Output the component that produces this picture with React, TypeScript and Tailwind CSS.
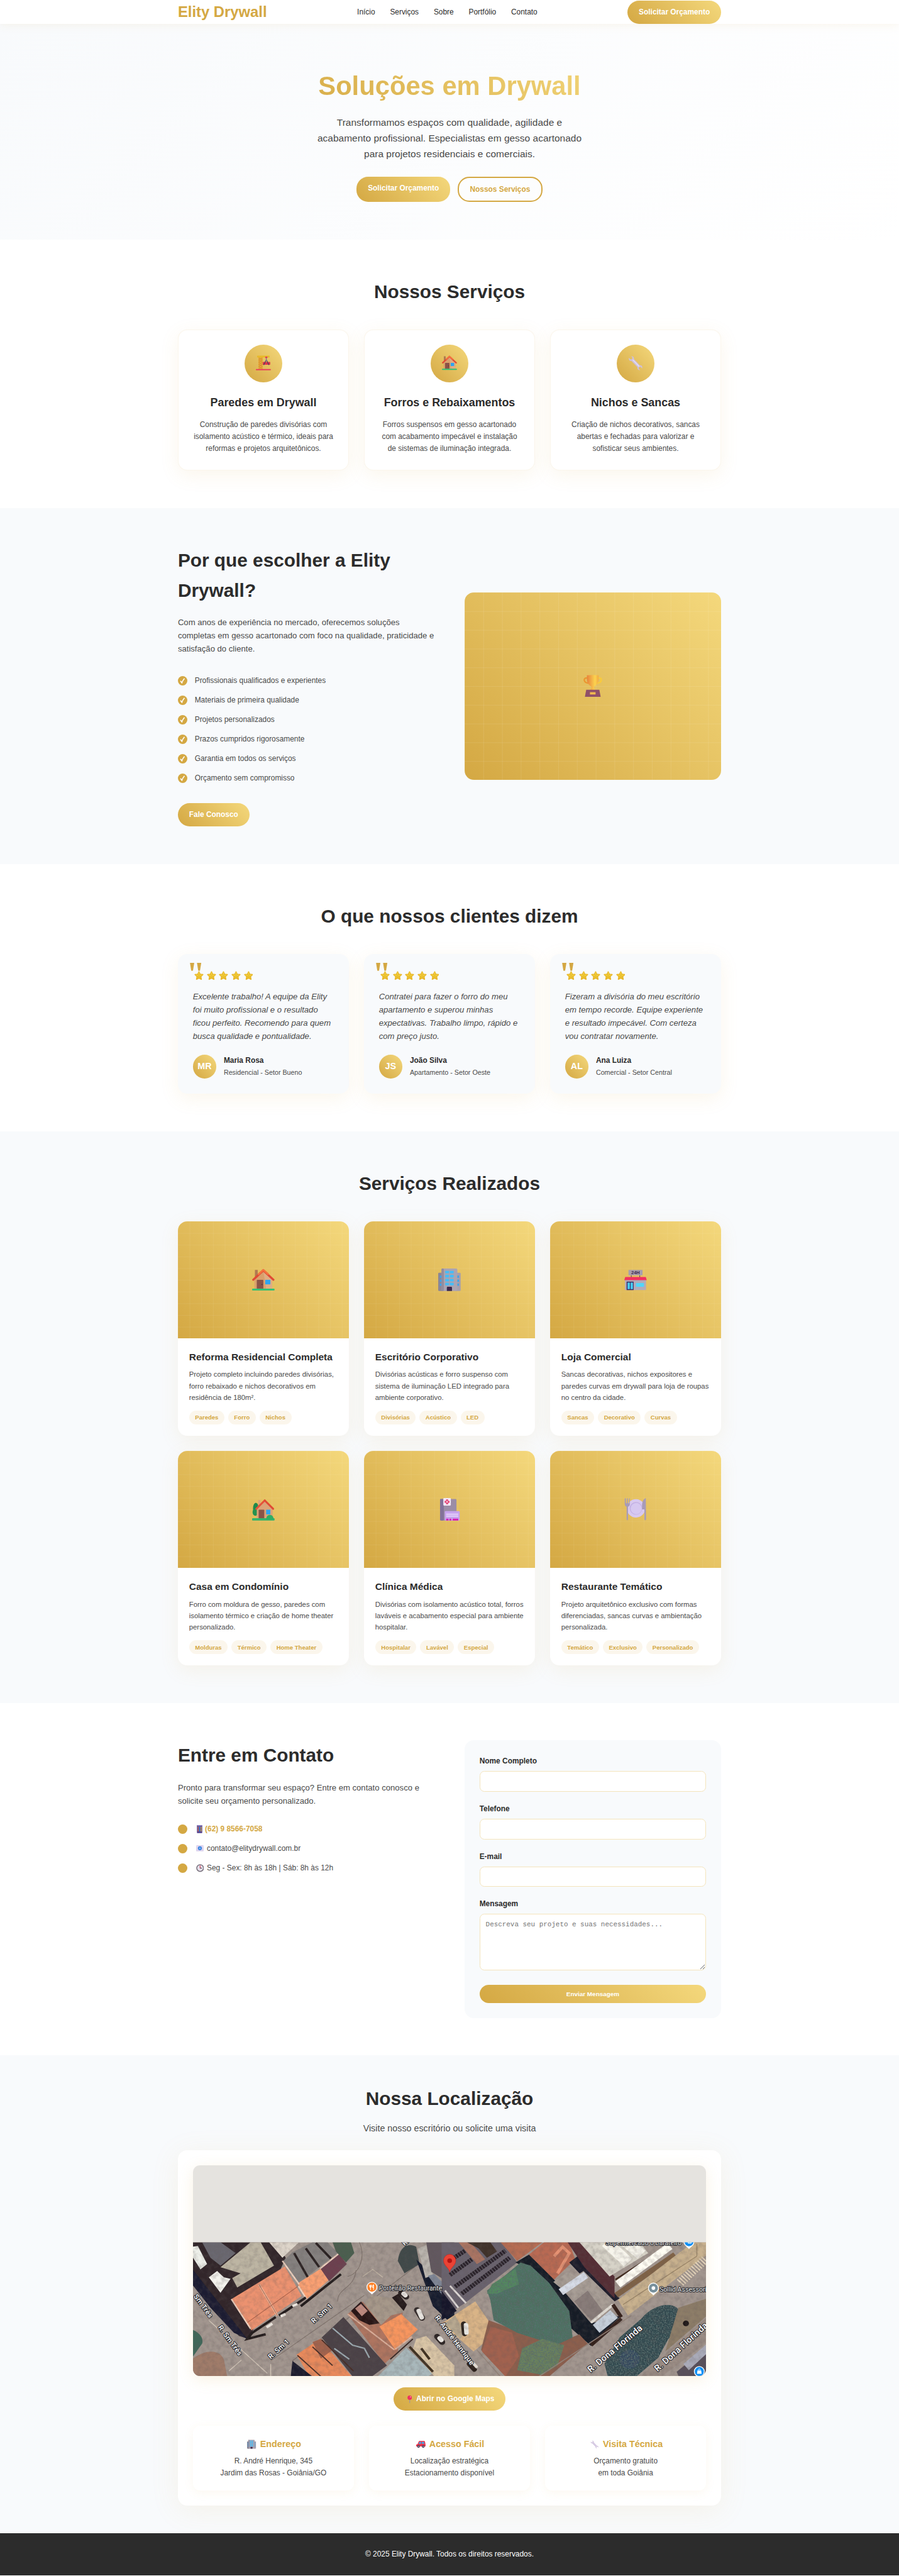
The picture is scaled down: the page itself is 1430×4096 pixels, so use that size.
import React, { ReactNode } from "react";

const GOLD_GRADIENT = "bg-[linear-gradient(45deg,#d4a843,#f4d87c)]";
const CARD_SHADOW = "shadow-[0_10px_40px_rgba(212,168,67,0.1)]";

type IconProps = { className?: string };

function Svg({ className, children }: { className?: string; children: ReactNode }) {
  return (
    <svg viewBox="0 0 48 48" className={className ?? "size-12"} aria-hidden="true">
      {children}
    </svg>
  );
}

function House({ className }: IconProps) {
  return (
    <Svg className={className}>
      <rect x="6" y="3" width="6" height="18" fill="#b07a50" />
      <path d="M5 22 24 5l19 17v22H5z" fill="#d9a06c" />
      <path d="M24 5 43 22v22H30z" fill="#e0ad82" />
      <rect x="10" y="24" width="14" height="20" rx="1.5" fill="#8a5347" />
      <circle cx="21" cy="34" r="1.2" fill="#5a332d" />
      <rect x="28" y="24" width="11" height="10" rx="1" fill="#2ea5f0" />
      <path d="M24 4 2.500 24" stroke="#e04a34" strokeWidth="4.500" strokeLinecap="round" />
      <path d="M24 4 45.500 24" stroke="#e04a34" strokeWidth="4.500" strokeLinecap="round" />
      <path d="M24 3 14 12M24 3l10 9" stroke="#f4733f" strokeWidth="4" strokeLinecap="round" />
      <rect x="0" y="43" width="48" height="4" rx="1.500" fill="#35c274" />
    </Svg>
  );
}

function GardenHouse({ className }: IconProps) {
  return (
    <Svg className={className}>
      <ellipse cx="8" cy="22" rx="6" ry="12" fill="#1f8a4c" />
      <ellipse cx="7" cy="30" rx="6" ry="8" fill="#26924f" />
      <rect x="13" y="4" width="5" height="14" fill="#dfa47c" />
      <path d="M10 22 27 7l17 15v22H10z" fill="#dca477" />
      <rect x="14" y="25" width="12" height="19" rx="1" fill="#8a5347" />
      <rect x="30" y="25" width="9" height="10" rx="1" fill="#2ea5f0" />
      <path d="M27 5 9 23" stroke="#e5523a" strokeWidth="4" strokeLinecap="round" />
      <path d="M27 5 45 23" stroke="#e04a34" strokeWidth="4" strokeLinecap="round" />
      <rect x="0" y="43" width="48" height="5" rx="1.500" fill="#35b56c" />
      <path d="M30 46c0-6 3-10 8-10s8 4 8 10z" fill="#2fae64" />
    </Svg>
  );
}

function Office({ className }: IconProps) {
  const cells = [0, 1, 2, 3];
  return (
    <Svg className={className}>
      <rect x="0" y="9" width="12" height="39" rx="2" fill="#8d8694" />
      <rect x="36" y="9" width="12" height="39" rx="2" fill="#a69fac" />
      <rect x="7" y="0" width="34" height="48" rx="3" fill="#aaa4b2" />
      <rect x="7" y="0" width="5" height="48" rx="2" fill="#948c9c" />
      {cells.map((r) => (
        <g key={r} fill="#45bdf7">
          <rect x="15" y={5 + r * 8.500} width="8" height="5.500" rx="0.800" />
          <rect x="25" y={5 + r * 8.500} width="8" height="5.500" rx="0.800" />
        </g>
      ))}
      {[0, 1, 2].map((r) => (
        <g key={r} fill="#3da4ea">
          <rect x="3.500" y={15 + r * 8.500} width="3.500" height="5" />
          <rect x="41" y={15 + r * 8.500} width="3.500" height="5" />
        </g>
      ))}
      <path d="M18.500 48V41a2 2 0 0 1 2-2h7a2 2 0 0 1 2 2v7z" fill="#3d2a4b" />
    </Svg>
  );
}

function Store({ className }: IconProps) {
  return (
    <Svg className={className}>
      <path d="M15 14v5M33 14v5" stroke="#5c4a63" strokeWidth="1.500" />
      <rect x="9" y="3" width="30" height="11.500" rx="1" fill="#a89fae" />
      <text x="24" y="12.300" textAnchor="middle" fontSize="10" fontWeight="700" fontFamily="Liberation Sans, sans-serif" fill="#3f2a50">
        24H
      </text>
      <rect x="1.500" y="23" width="45" height="23" rx="1" fill="#b3abba" />
      <path d="M2 18h44l2 7H0z" fill="#f2315f" />
      <rect x="5" y="28" width="15" height="18" fill="#3f2a60" />
      <rect x="7" y="30" width="5" height="14" fill="#45cdf7" />
      <rect x="13.500" y="30" width="5" height="14" fill="#45cdf7" />
      <rect x="25" y="31" width="17" height="8" fill="#52d6f9" />
    </Svg>
  );
}

function Hospital({ className }: IconProps) {
  return (
    <Svg className={className}>
      <rect x="4" y="2" width="35" height="46" rx="2" fill="#9b8da6" />
      <rect x="4" y="2" width="8" height="46" rx="2" fill="#83729a" />
      <rect x="14" y="28" width="32" height="20" rx="1.500" fill="#c7a4ee" />
      <path d="M17 34.500h26M17 38.500h26" stroke="#f1e6ff" strokeWidth="1.600" />
      <path d="M17 44h5v4h-5zM24 44h4v4h-4zM31 44h12v4H31z" fill="#d81fb0" />
      <rect x="11" y="0" width="16" height="16" rx="1.500" fill="#f4e8f6" />
      <path d="M19 3v10M14 8h10" stroke="#e0245e" strokeWidth="4" />
      <path d="M19 5v6M16 8h6" stroke="#fbe9f2" strokeWidth="1.200" />
    </Svg>
  );
}

function Plate({ className }: IconProps) {
  return (
    <Svg className={className}>
      <circle cx="25" cy="22" r="19.500" fill="#d8c9ef" />
      <circle cx="25" cy="22" r="13.500" fill="#c3b1e4" />
      <circle cx="25.500" cy="22.500" r="12" fill="#d6c8f0" />
      <path d="M1 1v11c0 4 2 6 4 6.500V46q1.500 3 3 0V18.500c2-.5 4-2.500 4-6.500V1q-1-1-1.500 0v10H8V1q-1.500-1-2 0v10H3.500V1q-1-1-2.500 0z" fill="#a79bb8" />
      <path d="M46 0c-5 2-8 8-8 16v8h5v22q1.500 3 3.500 0z" fill="#a79bb8" />
    </Svg>
  );
}

function Crane({ className }: IconProps) {
  return (
    <Svg className={className}>
      <rect x="8" y="3" width="14" height="42" fill="#e8a83a" />
      <path d="m9 8 12 7-12 7 12 7-12 7 12 7M21 8 9 15l12 7-12 7 12 7-12 7" stroke="#d08a2c" strokeWidth="1.500" fill="none" />
      <rect x="4" y="1" width="40" height="6" rx="1" fill="#e8b929" />
      <rect x="30" y="4" width="7" height="5" rx="1" fill="#e0405a" />
      <path d="M33.500 8v8" stroke="#7c6a86" strokeWidth="2" />
      <rect x="22" y="21" width="24" height="9" rx="1" fill="#e2364b" />
      <path d="M33.500 14 25 31M33.500 14 42 31" stroke="#51425f" strokeWidth="2.500" />
      <circle cx="33.500" cy="16" r="2.500" fill="#8c8093" />
      <rect x="0" y="44" width="48" height="4" rx="1.500" fill="#e9415c" />
    </Svg>
  );
}

function Wrench({ className }: IconProps) {
  return (
    <Svg className={className}>
      <path
        d="M10 3c5-1 10 3 9 9l19 20c6-1 9 4 7 10l-5-5-5 1-1 5 5 4c-6 1-10-3-9-9L11 18C5 19 1 14 3 8l5 5 5-1 1-5z"
        fill="#cdc0dc"
      />
      <path d="m16 15 19 20" stroke="#e6ddf3" strokeWidth="3" strokeLinecap="round" />
    </Svg>
  );
}

function Trophy({ className }: IconProps) {
  return (
    <svg viewBox="0 0 40 48" className={className} aria-hidden="true">
      <defs>
        <linearGradient id="cup" x1="0" x2="1">
          <stop offset="0" stopColor="#e8823c" />
          <stop offset="0.700" stopColor="#fbd34f" />
          <stop offset="1" stopColor="#f3a843" />
        </linearGradient>
      </defs>
      <path d="M9 7H5.500C3 7 1.800 9 1.800 11c0 4 4 6 8.500 7" stroke="#ea962f" strokeWidth="3" fill="none" />
      <path d="M31 7h3.500c2.500 0 3.700 2 3.700 4 0 4-4 6-8.500 7" stroke="#f9cb3a" strokeWidth="3" fill="none" />
      <path d="M7.500 1Q20-.5 32.500 1V9c0 7-3 11.500-8 15-2 1.500-2 3-1.500 4 .5 2 1.500 3.500 2.500 5h-11c1-1.500 2-3 2.500-5 .5-1 .5-2.500-1.500-4-5-3.500-8-8-8-15z" fill="url(#cup)" />
      <path d="M6 32h28l3 16H3z" fill="#8f5068" />
      <rect x="14" y="37" width="12" height="5" fill="#f2b94f" />
    </svg>
  );
}

function Star() {
  return (
    <svg viewBox="0 0 20 20" className="size-5" aria-hidden="true">
      <path
        d="M10 1.500 12.600 6.800 18.400 7.600 14.200 11.800 15.200 17.700 10 15 4.800 17.700 5.800 11.800 1.600 7.600 7.400 6.800z"
        fill="#eac12e"
        stroke="#e8b72b"
        strokeWidth="2.200"
        strokeLinejoin="round"
      />
      <path d="M10 3v4M4 8.500l4 1M16 8.500l-4 1" stroke="#f8dc4b" strokeWidth="1.200" strokeLinecap="round" />
    </svg>
  );
}

function Phone() {
  return (
    <svg viewBox="0 0 12 18" className="h-[17px] w-3" aria-hidden="true">
      <rect width="12" height="18" rx="1" fill="#54428e" />
      <path d="M1 1.500h10" stroke="#b9aee0" strokeWidth="1.500" />
      {[0, 1, 2].map((r) => (
        <g key={r}>
          <rect x="1.500" y={4.500 + r * 3.600} width="2.300" height="2.300" fill="#f2784b" />
          <rect x="4.900" y={4.500 + r * 3.600} width="2.300" height="2.300" fill="#3bb8f2" />
          <rect x="8.300" y={4.500 + r * 3.600} width="2.300" height="2.300" fill="#f4c33f" />
        </g>
      ))}
    </svg>
  );
}

function Email() {
  return (
    <svg viewBox="0 0 16 13" className="h-[13px] w-4" aria-hidden="true">
      <rect width="16" height="13" rx="1" fill="#dcd3ee" />
      <path d="m0 1 8 6 8-6" stroke="#f1ecfa" fill="none" />
      <circle cx="8" cy="6.500" r="4.200" fill="#2f7de0" />
      <circle cx="8" cy="6.500" r="1.500" fill="none" stroke="#bcdcff" />
    </svg>
  );
}

function Clock() {
  return (
    <svg viewBox="0 0 17 17" className="size-[17px]" aria-hidden="true">
      <circle cx="8.500" cy="8.500" r="7.200" fill="#e6e1ec" stroke="#77707c" strokeWidth="2" />
      <path d="M8.500 3v6" stroke="#e0405a" strokeWidth="1.600" />
      <path d="M8.500 8.700H12" stroke="#514659" strokeWidth="1.600" />
    </svg>
  );
}

function Pushpin() {
  return (
    <svg viewBox="0 0 10 17" className="h-[17px] w-2.5" aria-hidden="true">
      <path d="M5 8v8.500" stroke="#9d93a8" strokeWidth="1.500" />
      <circle cx="5" cy="4.800" r="4.700" fill="#ee2f5f" />
      <circle cx="6.500" cy="3" r="1.200" fill="#ff9db0" />
    </svg>
  );
}

function Car() {
  return (
    <svg viewBox="0 0 20 15" className="h-[15px] w-5" aria-hidden="true">
      <path d="M3 7 5.500 1.500Q6 .5 7 .5h10q1.500 0 1.800 1.500L20 8v4H0V9q0-1.500 3-2z" fill="#e8364e" />
      <path d="M5 6.500 7 2.500h3.500v4zM12 2.500h4.500l1 4H12z" fill="#3fa9ee" />
      <circle cx="5" cy="12" r="2.800" fill="#41354f" />
      <circle cx="15" cy="12" r="2.800" fill="#41354f" />
      <circle cx="5" cy="12" r="1.100" fill="#cfc6da" />
      <circle cx="15" cy="12" r="1.100" fill="#cfc6da" />
    </svg>
  );
}

function Button({ children, className = "" }: { children: ReactNode; className?: string }) {
  return (
    <a className={`inline-block rounded-[25px] px-6 py-3 font-semibold text-white ${GOLD_GRADIENT} ${className}`}>
      {children}
    </a>
  );
}

function Container({ children }: { children: ReactNode }) {
  return <div className="mx-auto w-[1160px]">{children}</div>;
}

function Heading({ children, className = "" }: { children: ReactNode; className?: string }) {
  return <h2 className={`text-[40px] leading-[64px] font-bold text-[#2c2c2c] ${className}`}>{children}</h2>;
}

const services = [
  { Icon: Crane, title: "Paredes em Drywall", lines: ["Construção de paredes divisórias com", "isolamento acústico e térmico, ideais para", "reformas e projetos arquitetônicos."] },
  { Icon: House, title: "Forros e Rebaixamentos", lines: ["Forros suspensos em gesso acartonado", "com acabamento impecável e instalação", "de sistemas de iluminação integrada."] },
  { Icon: Wrench, title: "Nichos e Sancas", lines: ["Criação de nichos decorativos, sancas", "abertas e fechadas para valorizar e", "sofisticar seus ambientes."] },
];

const reasons = [
  "Profissionais qualificados e experientes",
  "Materiais de primeira qualidade",
  "Projetos personalizados",
  "Prazos cumpridos rigorosamente",
  "Garantia em todos os serviços",
  "Orçamento sem compromisso",
];

const testimonials = [
  { initials: "MR", name: "Maria Rosa", place: "Residencial - Setor Bueno", lines: ["Excelente trabalho! A equipe da Elity", "foi muito profissional e o resultado", "ficou perfeito. Recomendo para quem", "busca qualidade e pontualidade."] },
  { initials: "JS", name: "João Silva", place: "Apartamento - Setor Oeste", lines: ["Contratei para fazer o forro do meu", "apartamento e superou minhas", "expectativas. Trabalho limpo, rápido e", "com preço justo."] },
  { initials: "AL", name: "Ana Luiza", place: "Comercial - Setor Central", lines: ["Fizeram a divisória do meu escritório", "em tempo recorde. Equipe experiente", "e resultado impecável. Com certeza", "vou contratar novamente."] },
];

const projects = [
  { Icon: House, title: "Reforma Residencial Completa", lines: ["Projeto completo incluindo paredes divisórias,", "forro rebaixado e nichos decorativos em", "residência de 180m²."], tags: ["Paredes", "Forro", "Nichos"] },
  { Icon: Office, title: "Escritório Corporativo", lines: ["Divisórias acústicas e forro suspenso com", "sistema de iluminação LED integrado para", "ambiente corporativo."], tags: ["Divisórias", "Acústico", "LED"] },
  { Icon: Store, title: "Loja Comercial", lines: ["Sancas decorativas, nichos expositores e", "paredes curvas em drywall para loja de roupas", "no centro da cidade."], tags: ["Sancas", "Decorativo", "Curvas"] },
  { Icon: GardenHouse, title: "Casa em Condomínio", lines: ["Forro com moldura de gesso, paredes com", "isolamento térmico e criação de home theater", "personalizado."], tags: ["Molduras", "Térmico", "Home Theater"] },
  { Icon: Hospital, title: "Clínica Médica", lines: ["Divisórias com isolamento acústico total, forros", "laváveis e acabamento especial para ambiente", "hospitalar."], tags: ["Hospitalar", "Lavável", "Especial"] },
  { Icon: Plate, title: "Restaurante Temático", lines: ["Projeto arquitetônico exclusivo com formas", "diferenciadas, sancas curvas e ambientação", "personalizada."], tags: ["Temático", "Exclusivo", "Personalizado"] },
];

const infoCards = [
  { icon: <Office className="h-[20px] w-[19px]" />, title: "Endereço", lines: ["R. André Henrique, 345", "Jardim das Rosas - Goiânia/GO"] },
  { icon: <Car />, title: "Acesso Fácil", lines: ["Localização estratégica", "Estacionamento disponível"] },
  { icon: <Wrench className="size-[18px]" />, title: "Visita Técnica", lines: ["Orçamento gratuito", "em toda Goiânia"] },
];

function Lines({ lines, className }: { lines: string[]; className: string }) {
  return (
    <p className={`whitespace-nowrap ${className}`}>
      {lines.map((line) => (
        <span key={line} className="block">
          {line}
        </span>
      ))}
    </p>
  );
}

function StreetLabel({ x, y, angle, size = 15, children }: { x: number; y: number; angle: number; size?: number; children: string }) {
  return (
    <text
      transform={`translate(${x} ${y}) rotate(${angle})`}
      fontSize={size}
      fontWeight="500"
      letterSpacing="0.4"
      fill="#fff"
      stroke="#2b2b30"
      strokeWidth="3"
      strokeLinejoin="round"
      paintOrder="stroke"
    >
      {children}
    </text>
  );
}

function PlacePin({ x, y, color, children }: { x: number; y: number; color: string; children?: ReactNode }) {
  return (
    <g transform={`translate(${x} ${y})`}>
      <path d="M-11.500 0a11.500 11.500 0 1 1 23 0c0 5-3 8-6 10.500L0 15.500l-5.500-5C-8.500 8-11.500 5-11.500 0z" fill="#fff" />
      <circle r="9.700" fill={color} />
      {children}
    </g>
  );
}

function SatelliteMap() {
  return (
    <svg viewBox="0 0 1096 450" className="block h-[450px] w-full" fontFamily="Roboto, sans-serif">
      <defs>
        <clipPath id="tiles">
          <rect x="0" y="164.300" width="1096" height="286" />
        </clipPath>
        <filter id="grain" x="0" y="0" width="100%" height="100%">
          <feTurbulence type="fractalNoise" baseFrequency="0.100" numOctaves="4" seed="7" />
          <feColorMatrix values="0 0 0 0 0.120  0 0 0 0 0.100  0 0 0 0 0.100  1.600 0 0 0 -0.620" />
        </filter>
        <filter id="foliage" x="0" y="0" width="100%" height="100%">
          <feTurbulence type="fractalNoise" baseFrequency="0.120" numOctaves="3" seed="3" result="n" />
          <feColorMatrix in="n" values="0 0 0 0 0.100  0 0 0 0 0.160  0 0 0 0 0.160  3 0 0 0 -1.300" />
          <feComposite in2="SourceAlpha" operator="in" result="d" />
          <feMerge>
            <feMergeNode in="SourceGraphic" />
            <feMergeNode in="d" />
          </feMerge>
        </filter>
        <filter id="soft">
          <feGaussianBlur stdDeviation="1.800" />
        </filter>
      </defs>
      <rect width="1096" height="450" fill="#e5e3df" />
      <g clipPath="url(#tiles)">
        <rect y="164" width="1096" height="286" fill="#a2968f" />

        <g transform="translate(-2 157.300) scale(0.35714 0.33333)" filter="url(#soft)">
          <path d="M0 20H500L560 120 340 640 280 620 0 250z" fill="#30262a" />
          <path d="M0 190 330 640 250 600 110 440 0 290z" fill="#1b1c30" />
          <path d="M0 50 35 45 90 160 50 195 0 110z" fill="#eef0ea" />
          <path d="M60 20h110l90 70-90 80-60-50z" fill="#6a6870" />
          <path d="M170 180 350 20h60l80 150-220 140-30-60 50-30z" fill="#bdb5a3" />
          <path d="m100 245 50-40 40 40 40 10-60 90z" fill="#f4f3ee" />
          <path d="M460 20H640L540 120z" fill="#ded5ca" />
          <path d="M600 85 720 20h90l60 70-230 190-95-140z" fill="#85817f" />
          <path d="m610 90 90 170M680 60l80 120M740 25l90 100" stroke="#2c2022" strokeWidth="14" />
          <path d="m235 385 320-210 100 190-300 220z" fill="#ec9270" />
          <path d="m400 290 110 200" stroke="#f6c4a6" strokeWidth="12" />
          <path d="m400 290 110 200M330 535 650 290" stroke="#a85f48" strokeWidth="4" />
          <path d="m630 285 140-95 45 75-130 120z" fill="#fba173" />
          <path d="m765 185 110-95 50 70-105 110z" fill="#6d4150" />
          <path d="m540 140 100 150M765 190l110-95M235 385l115 190M635 300l50 85" stroke="#f0d3c0" strokeWidth="9" fill="none" />
          <path d="m890 225-240 205M680 375 520 490M500 500 360 600 330 640 440 610" stroke="#241a1b" strokeWidth="15" fill="none" />
          <path d="m600 430 30-15M530 495l28-15M445 565l35-22" stroke="#f2ece4" strokeWidth="16" />
          <path d="M840 20h110l20 70-50 60-60-70z" fill="#4c5e50" />
          <path d="M0 580c50 20 70 60 60 90L0 760z" fill="#41685a" />
          <path d="M0 770c70-60 160-70 190 0l20 110H0z" fill="#a07c6b" />
          <path d="m220 845 75-70M100 520 450 860M470 800v80" stroke="#d2c6b8" strokeWidth="5" fill="none" />
          <path d="M1000 20c40 100 0 200-70 220M870 400c0-90 100-80 110-200M470 780 1030 360M1330 180 600 780" stroke="#7d7069" strokeWidth="4" fill="none" />
          <path d="m1020 240 60-45 60 50" stroke="#c5b8a7" strokeWidth="5" fill="none" />
          <path d="M1230 140c10-90 60-120 110-90l20 110-90 60z" fill="#3f4a49" />
          <path d="M1340 130 1568 360V560L1440 430z" fill="#181b2d" />
          <path d="M1350 60 1400 40 1440 230 1395 250z" fill="#bab5ae" />
          <path d="M1400 20H1568V300L1430 210z" fill="#62585f" />
          <path d="m1410 235 158 230v-110l-120-130z" fill="#7f8797" />
          <path d="m1070 360 130 20 60 80-130 90-110-120z" fill="#a6988a" />
          <path d="m930 480 90-80 110 150 60-60 70-20-30 250-80 80z" fill="#ae7460" />
          <path d="m950 460 60-60 110 140-60 10-60 -30z" fill="#2a1717" />
          <path d="m975 445 35-30 40 45-35 35z" fill="#c08b80" />
          <path d="m1120 560 130-80 100 100-135 130z" fill="#f8965f" />
          <path d="m775 630 130-130 260 310-90 70H960z" fill="#4b4247" />
          <path d="m840 570 120 110 70 20 30 60M850 700l90 70" stroke="#9caab0" strokeWidth="9" fill="none" />
          <path d="m1195 375 70 85 20-40-50-70z" fill="#271c1c" />
          <path d="m625 740 140-100 190 240H700z" fill="#e98a5c" />
          <path d="m720 660 50-20 70 70-70 55z" fill="#a2634d" />
          <path d="m630 745 140 135M775 645l190 200M720 690l120 120" stroke="#4a2d25" strokeWidth="7" />
          <path d="M600 780 720 880H590z" fill="#1c1c2d" />
          <path d="m1110 880 170-185 160 165-30 20z" fill="#a9b8bb" />
          <path d="m1340 640 60-20 168 190v70h-120l-130-170z" fill="#d9c5a6" />
          <path d="m1300 690 140 160M1370 700l50 70" stroke="#413021" strokeWidth="15" />
          <path d="m1250 345 30 25M1345 455l30 50M1465 625l30 35" stroke="#2b2220" strokeWidth="36" strokeLinecap="round" />
          <path d="m1265 350 10 10M1355 460l18 42M1480 635l10 12" stroke="#e9e5e0" strokeWidth="28" strokeLinecap="round" />
          <path d="m930 480 280 230M1215 705l100-80" stroke="#dfb29c" strokeWidth="9" />
          <path d="M1185 770 1320 640" stroke="#3a2722" strokeWidth="8" />
        </g>

        <g transform="translate(538 157.300) scale(0.3585 0.33333)" filter="url(#soft)">
          <path d="M-20 20H340L430 150 120 410 60 450-20 350z" fill="#6b636e" />
          <path d="M80 20h70l90 110-50 30z" fill="#aa7463" />
          <path d="M130 20h140l40 60-60 40-50-60z" fill="#40302b" />
          {["M10 150 120 75", "M30 230 160 130", "M60 305 360 75", "M100 350 385 120"].map((d) => (
            <path key={d} d={d} stroke="#29242c" strokeWidth="27" strokeDasharray="13 4" />
          ))}
          <path d="m30 300 95 110M0 330l80 110" stroke="#dcd7d5" strokeWidth="11" />
          <path d="m-20 330 90 130-90 60z" fill="#14152a" />
          <path d="M330 20h250L430 140z" fill="#b66d53" />
          <path d="m500 100 90-80h150l35 110-130 135z" fill="#b96b53" />
          <path d="m650 110 50-60 40 40-70 130" stroke="#e69273" strokeWidth="18" fill="none" />
          <path d="m420 150 80-50 150 160 220 280 180-50-180 195-230-220-150-280z" fill="#161c28" />
          <path d="m740 150 50-40 250 270-30 20-200-170z" fill="#1c1c2b" />
          <path d="M730 20h80l200 220v140L830 180z" fill="#542d36" />
          <path d="M800 20h360l50 70-230 150z" fill="#d7d3c8" />
          <path d="m960 20 130 130M1080 20l90 80" stroke="#f7f5ec" strokeWidth="70" />
          <path d="m1015 260 330-230" stroke="#41291d" strokeWidth="9" />
          <path d="m1030 290 310-245" stroke="#fffdf4" strokeWidth="48" />
          <path d="m1020 360 350-260" stroke="#806347" strokeWidth="35" />
          <path d="M1030 390 1380 100l100-80h82v80L1090 490z" fill="#c8b18e" />
          <path d="M1060 420 1500 110V30" stroke="#9b8567" strokeWidth="5" fill="none" />
          <path d="m1400 280 150-150" stroke="#e3d3b9" strokeWidth="55" strokeDasharray="8 9" />
          <path d="m645 275 90-65 40 30 50-35 190 200-130 110-150-160z" fill="#a89e96" />
          <path d="m690 340 150-110" stroke="#d7dce7" strokeWidth="45" />
          <path d="m770 400 80-70 90 130-70 60z" fill="#887b79" />
          <path d="m870 535 130-115" stroke="#e4e0d8" strokeWidth="15" />
          <path d="m880 550 105-95 45 50-110 95z" fill="#c6cfda" />
          <path d="m870 680 180-170M1000 420l50 80" stroke="#35211e" strokeWidth="22" />
          <path d="M-20 540 180 400l90 140-20 110-80 70z" fill="#d9b487" />
          <path d="m0 540 60-50 60 110-30 40z" fill="#b7a890" />
          <path d="m112 545 6 60" stroke="#2a221d" strokeWidth="34" strokeLinecap="round" />
          <path d="m125 550 3 50" stroke="#e8e6e1" strokeWidth="27" strokeLinecap="round" />
          <path d="m260 520 200 80 250 50 90-40 50 60-230 210H360L215 710z" fill="#8c5f4e" />
          <path d="m270 560 130 40 40 150-80 130-140-160z" fill="#a2624f" />
          <g filter="url(#foliage)">
            <path d="m250 330 200-180 60 20 110 110 120 180 20 170-100 50-230-80-140-80-20-130z" fill="#4e7262" />
            <path d="m250 350 30-60 140-100 20 100-130 60z" fill="#538a5e" />
            <path d="m460 700 120-60 130 40-40 130-90 60-150-30z" fill="#6b825d" />
            <path d="M1170 510c60-80 160-110 210-70 60 60 20 150-50 200l-60 120-130 120H970l-20-80 90-170z" fill="#304a4f" />
            <circle cx="1100" cy="770" r="60" fill="#36495f" />
          </g>
          <path d="m1562 500-400 380h130l270-220z" fill="#9b8d85" />
          <path d="m1390 440 172-60v110l-250 230z" fill="#8d7d68" />
          <path d="m1380 850 182-160v190h-170z" fill="#58505a" />
          <path d="m1420 800 142-130v60l-110 110z" fill="#a9aab8" />
          <circle cx="1435" cy="540" r="18" fill="#1c1615" />
          <path d="m145 800 30 35" stroke="#2d241f" strokeWidth="30" strokeLinecap="round" />
          <path d="m172 800 15 18" stroke="#e2dad0" strokeWidth="18" strokeLinecap="round" />
          <path d="m190 710 140 170M1110 490 560 880" stroke="#94847a" strokeWidth="6" />
        </g>
        <rect y="164" width="1096" height="286" filter="url(#grain)" opacity="0.350" />

        <StreetLabel x={1} y={280} angle={54}>Sm Três</StreetLabel>
        <StreetLabel x={53} y={346} angle={54}>R. Sm Três</StreetLabel>
        <StreetLabel x={258} y={338} angle={-42}>R. Sm 1</StreetLabel>
        <StreetLabel x={166} y={414} angle={-42}>R. Sm 1</StreetLabel>
        <StreetLabel x={516} y={325} angle={53}>R. André Henrique</StreetLabel>
        <StreetLabel x={849} y={443} angle={-40} size={19}>R. Dona Florinda</StreetLabel>
        <StreetLabel x={992} y={441} angle={-42} size={19}>R. Dona Florinda</StreetLabel>
        <StreetLabel x={452} y={172} angle={-42}>R.</StreetLabel>

        <g fontSize="14.200" fill="#e8e8e8" stroke="#26262a" strokeWidth="2.800" strokeLinejoin="round" paintOrder="stroke">
          <text x="397" y="267.500" textLength="135">Porteirão Restaurante</text>
          <text x="881" y="170.500" textLength="162">Supermercado o barateiro</text>
          <text x="996" y="269.500">Sollid Assessori</text>
        </g>
        <PlacePin x={382} y={260} color="#ff8126">
          <path d="M-3-5v4.500M-1-5v4.500M-5-5v3q0 2 2 2t2-2M-3 0v6M3.500 6V-5C1.500-4 1.500-1 1.800 1h1.700" stroke="#fff" strokeWidth="1.400" fill="none" />
        </PlacePin>
        <PlacePin x={983} y={262} color="#78909c">
          <circle r="3.800" fill="#fff" />
        </PlacePin>
        <PlacePin x={1059} y={163} color="#0f8ff5">
          <path d="M-5-3h2l1.500 6h6L6-1.500h-8" stroke="#fff" strokeWidth="1.500" fill="none" />
        </PlacePin>
        <PlacePin x={1081} y={440} color="#0f8ff5">
          <path d="M-4-2h8l1 7H-5z" fill="#fff" />
          <path d="M-2-2v-1.500a2 2 0 0 1 4 0V-2" stroke="#fff" strokeWidth="1.200" fill="none" />
        </PlacePin>
        <path d="M548 228c-1-9-13-14-13-25a13 13 0 1 1 26 0c0 11-12 16-13 25z" fill="#ea4335" stroke="#c5221f" strokeWidth="0.800" />
        <circle cx="548" cy="203.500" r="5" fill="#b31412" />
      </g>
    </svg>
  );
}

function Field({ label, children }: { label: string; children: ReactNode }) {
  return (
    <div>
      <label className="mb-2 block font-semibold text-[#2c2c2c]">{label}</label>
      {children}
    </div>
  );
}

function ContactItem({ icon, children }: { icon: ReactNode; children: ReactNode }) {
  return (
    <li className="flex items-center gap-4 py-2">
      <span className="size-5 rounded-full bg-[#d4a843]" />
      <span className="flex items-center">
        <span className="flex w-[22px] justify-center">{icon}</span>
        {children}
      </span>
    </li>
  );
}

const inputClass = "block h-11 w-full rounded-[10px] border border-[#f4e4bc] bg-white px-3";

export default function App() {
  return (
    <div className="bg-white font-['Liberation_Sans',Arial,sans-serif] text-base leading-[25.6px] text-[#4a4a4a] [zoom:0.745]">
      <header className="relative z-10 h-[51.2px] bg-white shadow-[0_2px_20px_rgba(212,168,67,0.1)]">
        <div className="mx-auto flex h-full w-[1160px] items-center justify-between">
          <div className="text-[32px] leading-[51.2px] font-bold text-[#d4a843]">Elity Drywall</div>
          <nav className="flex gap-8 text-[#2c2c2c]">
            <a>Início</a>
            <a>Serviços</a>
            <a>Sobre</a>
            <a>Portfólio</a>
            <a>Contato</a>
          </nav>
          <Button>Solicitar Orçamento</Button>
        </div>
      </header>

      <section className="h-[459.8px] bg-[linear-gradient(135deg,#f8fafc,#ffffff)] pt-[88.8px]">
        <div className="mx-auto w-[800px] text-center">
          <h1 className="mb-4 bg-[linear-gradient(45deg,#d4a843,#f4d87c)] bg-clip-text text-[56px] leading-[89.6px] font-bold text-transparent">
            Soluções em Drywall
          </h1>
          <Lines
            className="mb-8 text-[20.8px] leading-[33.28px]"
            lines={["Transformamos espaços com qualidade, agilidade e", "acabamento profissional. Especialistas em gesso acartonado", "para projetos residenciais e comerciais."]}
          />
          <div className="flex justify-center gap-4">
            <Button>Solicitar Orçamento</Button>
            <a className="rounded-[25px] border-[2.7px] border-[#d4a843] px-[23.3px] py-[11.3px] font-semibold text-[#d4a843]">Nossos Serviços</a>
          </div>
        </div>
      </section>

      <section className="bg-white py-20">
        <Container>
          <Heading className="mb-12 text-center">Nossos Serviços</Heading>
          <div className="grid grid-cols-3 gap-8">
            {services.map(({ Icon, title, lines }) => (
              <div key={title} className={`flex flex-col items-center rounded-[20px] border border-[#d4a843]/10 bg-white p-[31.6px] text-center ${CARD_SHADOW}`}>
                <div className={`mb-6 flex size-20 items-center justify-center rounded-full ${GOLD_GRADIENT}`}>
                  <Icon className="mb-0.5 size-8" />
                </div>
                <h3 className="mb-4 text-2xl leading-[38.4px] font-bold whitespace-nowrap text-[#2c2c2c]">{title}</h3>
                <Lines className="" lines={lines} />
              </div>
            ))}
          </div>
        </Container>
      </section>

      <section className="bg-[#f8fafc] py-20">
        <Container>
          <div className="grid grid-cols-2 items-center gap-16">
            <div>
              <Heading className="mb-6">
                Por que escolher a Elity
                <br />
                Drywall?
              </Heading>
              <Lines
                className="mb-8 text-[17.6px] leading-[28.16px]"
                lines={["Com anos de experiência no mercado, oferecemos soluções", "completas em gesso acartonado com foco na qualidade, praticidade e", "satisfação do cliente."]}
              />
              <ul className="mb-8">
                {reasons.map((reason) => (
                  <li key={reason} className="flex items-center gap-4 py-2">
                    <span className="flex size-5 items-center justify-center rounded-full bg-[#d4a843]">
                      <svg viewBox="0 0 12 12" className="size-3" aria-hidden="true">
                        <path d="M1.500 6.500 4.500 10.500Q6 5.500 10 1" stroke="#fff" strokeWidth="2.100" fill="none" />
                      </svg>
                    </span>
                    {reason}
                  </li>
                ))}
              </ul>
              <Button>Fale Conosco</Button>
            </div>
            <div className="flex h-[400px] items-center justify-center rounded-[20px] bg-[linear-gradient(rgba(255,255,255,0.09)_1px,transparent_1px),linear-gradient(90deg,rgba(255,255,255,0.09)_1px,transparent_1px),linear-gradient(45deg,#d4a843,#f4d87c)] bg-size-[40px_40px,40px_40px,100%_100%]">
              <Trophy className="h-12 w-10" />
            </div>
          </div>
        </Container>
      </section>

      <section className="bg-white py-20">
        <Container>
          <Heading className="mb-12 text-center">O que nossos clientes dizem</Heading>
          <div className="grid grid-cols-3 gap-8">
            {testimonials.map((t) => (
              <div key={t.name} className={`relative rounded-[20px] bg-[#f8fafc] p-8 ${CARD_SHADOW}`}>
                <span className="absolute top-[7px] left-[18px] font-['Liberation_Serif',serif] text-[72px] leading-[72px] font-bold text-[#d4a843]">"</span>
                <div className="relative mb-4 flex h-[30.7px] items-center gap-[6.4px] pl-[3px]">
                  <Star />
                  <Star />
                  <Star />
                  <Star />
                  <Star />
                </div>
                <Lines className="mb-6 text-[17.6px] leading-[28.16px] italic" lines={t.lines} />
                <div className="flex items-center gap-4">
                  <div className={`flex size-[50px] items-center justify-center rounded-full text-[19.2px] font-bold text-white ${GOLD_GRADIENT}`}>
                    {t.initials}
                  </div>
                  <div>
                    <h4 className="font-bold text-[#2c2c2c]">{t.name}</h4>
                    <div>
                      <span className="text-[14.4px]">{t.place}</span>
                    </div>
                  </div>
                </div>
              </div>
            ))}
          </div>
        </Container>
      </section>

      <section className="bg-[#f8fafc] py-20">
        <Container>
          <Heading className="mb-12 text-center">Serviços Realizados</Heading>
          <div className="grid grid-cols-3 gap-8">
            {projects.map(({ Icon, title, lines, tags }) => (
              <article key={title} className={`overflow-hidden rounded-[20px] bg-white ${CARD_SHADOW}`}>
                <div className="flex h-[250px] items-center justify-center bg-[linear-gradient(rgba(255,255,255,0.06)_1px,transparent_1px),linear-gradient(90deg,rgba(255,255,255,0.06)_1px,transparent_1px),linear-gradient(45deg,#d4a843,#f4d87c)] bg-size-[25px_25px,25px_25px,100%_100%]">
                  <Icon className="size-12" />
                </div>
                <div className="p-6">
                  <h3 className="mb-2 text-[20.8px] leading-[33.28px] font-bold whitespace-nowrap text-[#2c2c2c]">{title}</h3>
                  <Lines className="mb-4 text-[15.2px] leading-[24.32px]" lines={lines} />
                  <div className="flex gap-2">
                    {tags.map((tag) => (
                      <span key={tag} className="rounded-[15px] bg-[#d4a843]/10 px-[12.8px] py-[4.8px] text-[12.8px] leading-[20.48px] font-semibold text-[#d4a843]">
                        {tag}
                      </span>
                    ))}
                  </div>
                </div>
              </article>
            ))}
          </div>
        </Container>
      </section>

      <section className="bg-white py-20">
        <Container>
          <div className="grid grid-cols-2 gap-16">
            <div>
              <Heading className="mb-6">Entre em Contato</Heading>
              <Lines
                className="mb-6 text-[17.6px] leading-[28.16px]"
                lines={["Pronto para transformar seu espaço? Entre em contato conosco e", "solicite seu orçamento personalizado."]}
              />
              <ul>
                <ContactItem icon={<Phone />}>
                  <a className="font-semibold text-[#d4a843]">(62) 9 8566-7058</a>
                </ContactItem>
                <ContactItem icon={<Email />}>
                  <span className="ml-1">contato@elitydrywall.com.br</span>
                </ContactItem>
                <ContactItem icon={<Clock />}>
                  <span className="ml-1">Seg - Sex: 8h às 18h | Sáb: 8h às 12h</span>
                </ContactItem>
              </ul>
            </div>
            <form className="flex flex-col gap-6 rounded-[20px] bg-[#f8fafc] p-8">
              <Field label="Nome Completo">
                <input className={inputClass} />
              </Field>
              <Field label="Telefone">
                <input className={inputClass} />
              </Field>
              <Field label="E-mail">
                <input className={inputClass} />
              </Field>
              <Field label="Mensagem">
                <textarea
                  placeholder="Descreva seu projeto e suas necessidades..."
                  className="mb-[7px] block h-[120px] w-full resize-y rounded-[10px] border border-[#f4e4bc] bg-white p-3 font-['Liberation_Mono',monospace] text-[14.66px] leading-[20px] placeholder:text-[#757575]"
                />
              </Field>
              <button type="button" className={`h-[39.3px] w-full rounded-[25px] text-[13.33px] font-semibold text-white ${GOLD_GRADIENT}`}>
                Enviar Mensagem
              </button>
            </form>
          </div>
        </Container>
      </section>

      <section className="bg-[#f8fafc] py-[60px]">
        <Container>
          <Heading className="mb-4 text-center">Nossa Localização</Heading>
          <p className="mb-8 text-center text-[19.2px] leading-[30.72px]">Visite nosso escritório ou solicite uma visita</p>
          <div className="rounded-[20px] bg-white p-8 shadow-[0_10px_60px_rgba(212,168,67,0.1)]">
            <div className="mb-6 overflow-hidden rounded-[15px] shadow-[0_8px_32px_rgba(212,168,67,0.15)]">
              <SatelliteMap />
            </div>
            <div className="mb-8 flex justify-center">
              <Button className="w-60">
                <span className="flex items-center">
                  <span className="mr-1 flex w-[21px] justify-center">
                    <Pushpin />
                  </span>
                  <span className="whitespace-nowrap">Abrir no Google Maps</span>
                </span>
              </Button>
            </div>
            <div className="grid grid-cols-3 gap-8">
              {infoCards.map((card) => (
                <div key={card.title} className="rounded-[15px] bg-white p-6 text-center shadow-[0_5px_20px_rgba(212,168,67,0.08)]">
                  <h3 className="mb-2 flex items-center justify-center text-[19.2px] leading-[30.72px] font-bold text-[#d4a843]">
                    <span className="mr-[5px] flex w-[26px] justify-center">{card.icon}</span>
                    {card.title}
                  </h3>
                  <Lines className="" lines={card.lines} />
                </div>
              ))}
            </div>
          </div>
        </Container>
      </section>

      <footer className="bg-[#2c2c2c] py-8 text-center text-white">
        <p>© 2025 Elity Drywall. Todos os direitos reservados.</p>
      </footer>
    </div>
  );
}
